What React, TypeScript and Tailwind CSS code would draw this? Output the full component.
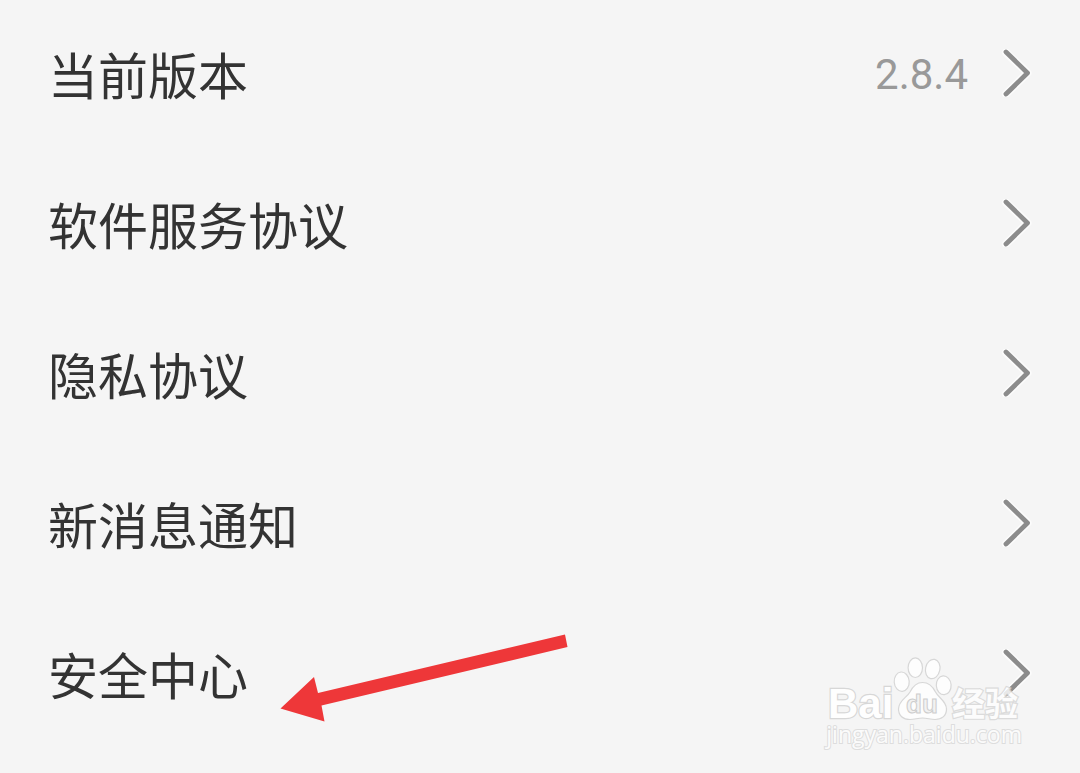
type Item = { id: string; label: string; value?: string };

const items: Item[] = [
  { id: "version", label: "当前版本", value: "2.8.4" },
  { id: "terms", label: "软件服务协议" },
  { id: "privacy", label: "隐私协议" },
  { id: "notifications", label: "新消息通知" },
  { id: "security", label: "安全中心" },
];

function Chevron() {
  return (
    <svg
      className="h-12 w-8 shrink-0"
      viewBox="0 0 32 48"
      fill="none"
      strokeLinecap="round"
      strokeLinejoin="round"
      aria-hidden="true"
    >
      <path d="M6 3.500L27.500 24L6 45" stroke="#fcfcfc" strokeWidth="8" />
      <path d="M6 3L27.500 24L6 45" stroke="#8c8c8c" strokeWidth="4.800" />
    </svg>
  );
}

function Row({ item }: { item: Item }) {
  return (
    <li>
      <a
        href={`#${item.id}`}
        className="flex h-[150px] items-center justify-between pr-12 pl-12"
      >
        <span className="text-[50px] leading-[60px] text-[#333333]">{item.label}</span>
        <span className="flex items-center gap-8">
          {item.value && (
            <span className="pt-1 font-[Roboto,sans-serif] text-[42px] leading-[48px] text-[#999999]">
              {item.value}
            </span>
          )}
          <Chevron />
        </span>
      </a>
    </li>
  );
}

function Arrow() {
  return (
    <svg
      className="pointer-events-none absolute top-[634px] left-[280px] h-[88px] w-[288px]"
      viewBox="0 0 288 88"
      aria-hidden="true"
    >
      <path d="M0.500 74.500L34 43L38 59L285 0.500L287.500 13L41.500 71.500L44.500 87.500Z" fill="#ee3739" />
    </svg>
  );
}

function Watermark() {
  return (
    <div className="pointer-events-none absolute top-[652px] right-[58px] flex w-[204px] flex-col opacity-95">
      <svg className="h-20 w-[204px]" viewBox="-8 0 204 80" role="img" aria-label="Baidu 经验">
        <g fill="#ffffff" fillOpacity="0.85" stroke="#d6d6d6" strokeWidth="1.200">
          <text
            x="2"
            y="66"
            fontFamily="Liberation Sans, sans-serif"
            fontWeight="700"
            fontSize="42"
            strokeWidth="2.400"
            paintOrder="stroke"
            fillOpacity="1"
          >
            Bai
          </text>
          <ellipse cx="75.700" cy="29.700" rx="7.500" ry="9.700" transform="rotate(-4 75.700 29.700)" />
          <ellipse cx="89.300" cy="15.700" rx="7.200" ry="9.800" />
          <ellipse cx="106.700" cy="17" rx="7.200" ry="9.800" transform="rotate(12 106.700 17)" />
          <ellipse cx="117.700" cy="33.300" rx="7.400" ry="9.400" transform="rotate(-4 117.700 33.300)" />
          <path d="M96.500 30.500C103 30.500 107 35 109.500 40C112.500 46 120.500 49 120.500 57C120.500 64 115.500 67.500 109 67.500C104.500 67.500 101 66 96.500 66C92 66 88.500 67.500 84 67.500C77 67.500 72.500 63.500 72.500 57C72.500 48.500 81 45.500 84 40C86.500 35 90 30.500 96.500 30.500Z" />
          <text
            x="80"
            y="61"
            fontFamily="Liberation Sans, sans-serif"
            fontWeight="700"
            fontSize="26"
            fill="#f0f0f0"
            stroke="#cccccc"
            strokeWidth="1"
          >
            du
          </text>
          <text
            x="126"
            y="64"
            fontFamily="Noto Sans CJK SC, sans-serif"
            fontWeight="700"
            fontSize="33"
            strokeWidth="2.400"
            paintOrder="stroke"
            fillOpacity="1"
            opacity="0.85"
          >
            经验
          </text>
        </g>
      </svg>
      <span className="-mt-2.5 text-right font-['Open_Sans',sans-serif] text-[23px] leading-6 font-medium text-[#fcfcfc] [-webkit-text-stroke:2px_#dcdcdc] [paint-order:stroke_fill]">
        jingyan.baidu.com
      </span>
    </div>
  );
}

export default function App() {
  return (
    <main className="relative min-h-screen overflow-hidden bg-[#f5f5f5] font-['Noto_Sans_CJK_SC',sans-serif]">
      <ul className="-mt-0.5">
        {items.map((item) => (
          <Row key={item.id} item={item} />
        ))}
      </ul>
      <Arrow />
      <Watermark />
    </main>
  );
}
